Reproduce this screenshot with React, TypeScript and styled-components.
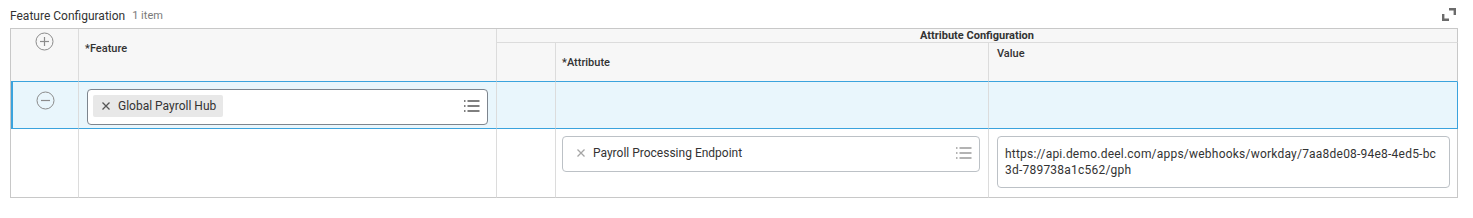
import React from "react"
import styled, { createGlobalStyle } from "styled-components"

const BLUE = "#3ba3dd"
const GRID = "#dcdcdc"
const OUTER = "#c8c8c8"

const GlobalStyle = createGlobalStyle`
  body {
    margin: 0;
    background: #fff;
    font-family: Roboto, "Liberation Sans", sans-serif;
    color: #333;
  }
`

const Panel = styled.section`
  padding: 8px 15px 0 10px;
`

const TitleBar = styled.div`
  display: flex;
  align-items: flex-start;
  height: 20px;
`

const Title = styled.h2`
  margin: 0;
  font-size: 12px;
  line-height: 16px;
  font-weight: 400;
  color: #333;
`

const Count = styled.span`
  margin-left: 7px;
  font-size: 11px;
  line-height: 16px;
  color: #7a7a7a;
`

const ExpandButton = styled.button`
  margin-left: auto;
  margin-right: 2px;
  padding: 0;
  border: 0;
  background: none;
  width: 14px;
  height: 13px;
  display: flex;
`

const Grid = styled.table`
  width: 1448px;
  table-layout: fixed;
  border-collapse: separate;
  border-spacing: 0;
  border-top: 1px solid ${OUTER};
  border-left: 1px solid ${OUTER};
`

const HeadCell = styled.th<{ $pad?: number; $center?: boolean; $edge?: string; $bold?: boolean; $last?: boolean }>`
  background: #f7f7f7;
  vertical-align: top;
  text-align: ${(p) => (p.$center ? "center" : "left")};
  padding: ${(p) => p.$pad ?? 0}px 6px 0;
  font-size: 11px;
  line-height: 13px;
  font-weight: ${(p) => (p.$bold ? 700 : 500)};
  color: #333;
  border-right: 1px solid ${(p) => (p.$last ? OUTER : GRID)};
  border-bottom: 1px solid ${(p) => p.$edge ?? GRID};
`

const Row = styled.tr<{ $selected?: boolean; $last?: boolean }>`
  td {
    background: ${(p) => (p.$selected ? "#e9f6fc" : "#fff")};
    border-bottom: 1px solid ${(p) => (p.$selected ? BLUE : p.$last ? OUTER : GRID)};
  }
  td:first-child {
    border-left: ${(p) => (p.$selected ? `2px solid ${BLUE}` : "0")};
  }
  td:last-child {
    border-right-color: ${(p) => (p.$selected ? BLUE : OUTER)};
  }
`

const Cell = styled.td<{ $h: number; $pad?: string; $center?: boolean }>`
  height: ${(p) => p.$h}px;
  box-sizing: border-box;
  vertical-align: top;
  text-align: ${(p) => (p.$center ? "center" : "left")};
  padding: ${(p) => p.$pad ?? "0"};
  border-right: 1px solid ${GRID};
`

const RowIcon = styled.svg`
  display: inline-block;
  vertical-align: top;
`

const Prompt = styled.div<{ $strong?: boolean }>`
  display: flex;
  align-items: flex-start;
  box-sizing: border-box;
  height: 36px;
  padding: 5px 7px 5px 5px;
  border: 1px solid ${(p) => (p.$strong ? "#7d858e" : "#bcc1c6")};
  border-radius: 4px;
  background: #fff;
`

const Chip = styled.span<{ $filled?: boolean }>`
  display: inline-flex;
  align-items: center;
  gap: 8px;
  height: 22px;
  padding: 0 7px 0 9px;
  border-radius: 2px;
  background: ${(p) => (p.$filled ? "#e8e8e8" : "transparent")};
  font-size: 12px;
  color: #333;
`

const ListIcon = styled.svg`
  margin-left: auto;
  margin-top: 5px;
`

const TextBox = styled.div`
  box-sizing: border-box;
  height: 52px;
  padding: 9px 8px 0 7px;
  border: 1px solid #bcc1c6;
  border-radius: 4px;
  font-size: 12px;
  line-height: 16px;
  letter-spacing: 0.22px;
  color: #333;
  word-break: break-all;
`

const Circle = ({ minus }: { minus?: boolean }) => (
  <RowIcon width="19" height="19" viewBox="0 0 19 19">
    <circle cx="9.5" cy="9.5" r="8.5" fill="none" stroke="#8b8b8b" strokeWidth="1" />
    <path d="M5 9.5h9" stroke="#8b8b8b" strokeWidth="1.2" />
    {!minus && <path d="M9.5 5v9" stroke="#8b8b8b" strokeWidth="1.2" />}
  </RowIcon>
)

const Remove = ({ color }: { color: string }) => (
  <svg width="8" height="8" viewBox="0 0 8 8">
    <path d="M0.5 0.5l7 7M7.5 0.5l-7 7" stroke={color} strokeWidth="1.3" />
  </svg>
)

const List = ({ color }: { color: string }) => (
  <ListIcon width="16" height="12" viewBox="0 0 16 12">
    {[1, 6, 11].map((y) => (
      <g key={y}>
        <rect x="0" y={y - 0.75} width="1.5" height="1.5" fill={color} />
        <rect x="3.5" y={y - 0.75} width="12" height="1.5" fill={color} />
      </g>
    ))}
  </ListIcon>
)

const Expand = () => (
  <svg width="14" height="13" viewBox="0 0 14 13">
    <path d="M7 1.2h5.8v5.8" fill="none" stroke="#6b6b6b" strokeWidth="2.4" />
    <path d="M1.2 6v5.8H7" fill="none" stroke="#6b6b6b" strokeWidth="2.4" />
  </svg>
)

export default function App() {
  return (
    <Panel>
      <GlobalStyle />
      <TitleBar>
        <Title>Feature Configuration</Title>
        <Count>1 item</Count>
        <ExpandButton aria-label="Expand">
          <Expand />
        </ExpandButton>
      </TitleBar>
      <Grid>
        <colgroup>
          <col style={{ width: 68 }} />
          <col style={{ width: 418 }} />
          <col style={{ width: 59 }} />
          <col style={{ width: 433 }} />
          <col style={{ width: 469 }} />
        </colgroup>
        <thead>
          <tr style={{ height: 13 }}>
            <HeadCell rowSpan={2} $center $pad={3} $edge={BLUE}>
              <Circle />
            </HeadCell>
            <HeadCell rowSpan={2} $pad={13} $edge={BLUE}>
              *Feature
            </HeadCell>
            <HeadCell colSpan={3} $center $bold $last>
              Attribute Configuration
            </HeadCell>
          </tr>
          <tr style={{ height: 39 }}>
            <HeadCell $edge={BLUE} />
            <HeadCell $pad={13} $edge={BLUE}>
              *Attribute
            </HeadCell>
            <HeadCell $pad={4} $edge={BLUE} $last style={{ paddingLeft: 8 }}>
              Value
            </HeadCell>
          </tr>
        </thead>
        <tbody>
          <Row $selected>
            <Cell $h={47} $center $pad="9px 0 0">
              <Circle minus />
            </Cell>
            <Cell $h={47} $pad="7px 8px 0">
              <Prompt $strong>
                <Chip $filled>
                  <Remove color="#555" />
                  Global Payroll Hub
                </Chip>
                <List color="#555" />
              </Prompt>
            </Cell>
            <Cell $h={47} />
            <Cell $h={47} />
            <Cell $h={47} />
          </Row>
          <Row $last>
            <Cell $h={69} />
            <Cell $h={69} />
            <Cell $h={69} />
            <Cell $h={69} $pad="7px 8px 0 6px">
              <Prompt>
                <Chip>
                  <Remove color="#a5a5a5" />
                  Payroll Processing Endpoint
                </Chip>
                <List color="#9a9a9a" />
              </Prompt>
            </Cell>
            <Cell $h={69} $pad="7px 7px 0 8px">
              <TextBox>
                https://api.demo.deel.com/apps/webhooks/workday/7aa8de08-94e8-4ed5-bc3d-789738a1c562/gph
              </TextBox>
            </Cell>
          </Row>
        </tbody>
      </Grid>
    </Panel>
  )
}
